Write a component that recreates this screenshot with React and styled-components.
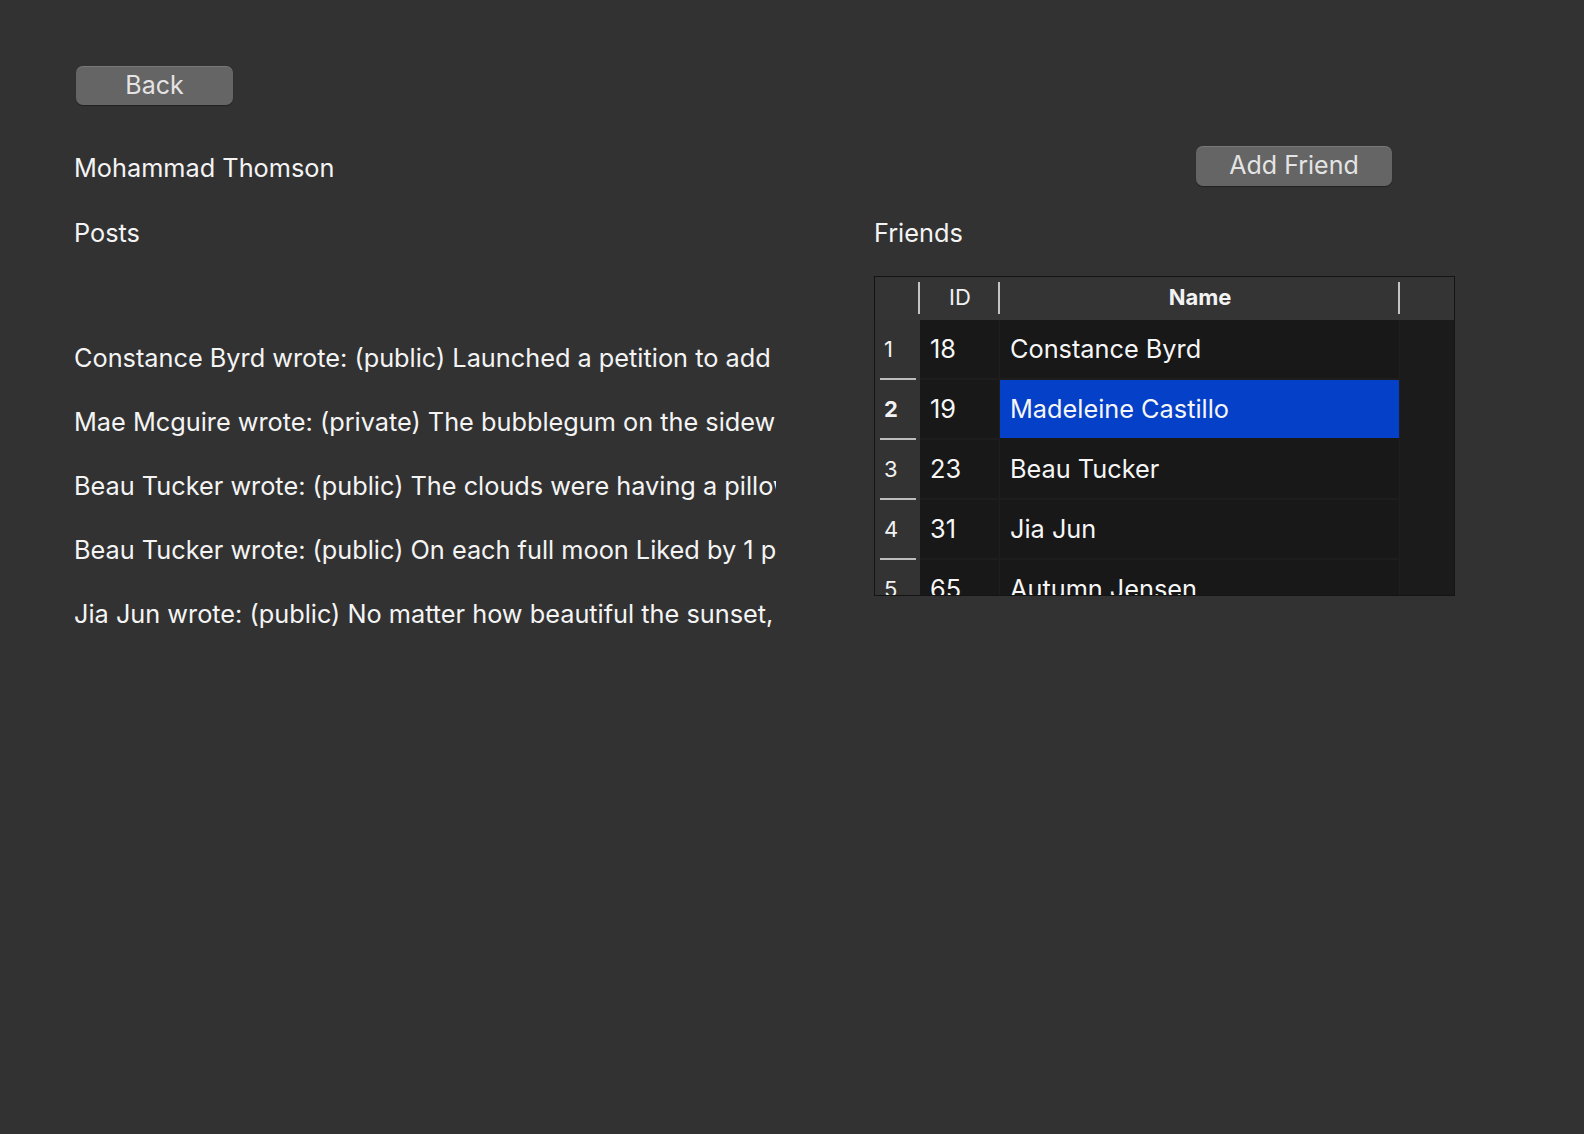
import React from 'react';
import styled, { createGlobalStyle } from 'styled-components';

const GlobalStyle = createGlobalStyle`
  html, body {
    margin: 0;
    padding: 0;
    background: #323232;
  }
  body {
    font-family: Inter, "Noto Sans", "Liberation Sans", sans-serif;
    color: #f2f2f2;
  }
`;

const Page = styled.div`
  min-height: 1134px;
  box-sizing: border-box;
  padding: 66px 0 0 74px;
  background: #323232;
`;

const Button = styled.button`
  display: flex;
  align-items: center;
  justify-content: center;
  width: ${({ w }) => w}px;
  height: ${({ h }) => h}px;
  margin-left: ${({ offset }) => offset || 0}px;
  padding: 0 0 2px;
  border: none;
  border-radius: 7px;
  background: #656565;
  box-shadow: 0 1px 1px rgba(0, 0, 0, 0.35), inset 0 1px 0 rgba(255, 255, 255, 0.12);
  color: #e4e4e4;
  font-family: inherit;
  font-size: 25px;
  cursor: pointer;
`;

const Layout = styled.div`
  display: grid;
  grid-template-columns: 800px 581px;
  margin-top: 41px;
`;

const Cell = styled.div`
  display: flex;
  align-items: center;
  min-height: ${({ h }) => h || 0}px;
`;

const Title = styled.div`
  font-size: 25.3px;
  line-height: 32px;
  padding-top: 4px;
  color: #f4f4f4;
`;

const LabelRow = styled.div`
  font-size: 25.3px;
  line-height: 32px;
  margin-top: 31px;
  margin-bottom: 27px;
  color: #f4f4f4;
`;

const PostList = styled.div`
  width: 702px;
  overflow: hidden;
  padding-top: 50px;
`;

const Post = styled.div`
  font-size: 25.3px;
  line-height: 64px;
  white-space: nowrap;
  color: #f4f4f4;
`;

const Table = styled.div`
  width: 581px;
  height: 320px;
  box-sizing: border-box;
  border: 1px solid #141414;
  background: #1b1b1b;
  overflow: hidden;
`;

const Row = styled.div`
  display: grid;
  grid-template-columns: 45px 80px 400px 1fr;
  height: ${({ h }) => h}px;
`;

const HeadCell = styled.div`
  position: relative;
  display: flex;
  align-items: center;
  justify-content: center;
  padding-bottom: 4px;
  background: #343434;
  font-size: 22px;
  font-weight: ${({ bold }) => (bold ? 700 : 400)};
  color: #f2f2f2;
  &::after {
    content: '';
    display: ${({ sep }) => (sep ? 'block' : 'none')};
    position: absolute;
    right: 0;
    top: 5px;
    bottom: 6px;
    width: 2px;
    background: #c4c4c4;
  }
`;

const RowNum = styled.div`
  position: relative;
  display: flex;
  align-items: center;
  padding-left: 9px;
  padding-bottom: 3px;
  background: #333333;
  font-size: 22px;
  font-weight: ${({ active }) => (active ? 700 : 400)};
  color: #f2f2f2;
  &::after {
    content: '';
    position: absolute;
    left: 5px;
    right: 4px;
    bottom: 0;
    height: 2px;
    background: #bdbdbd;
  }
`;

const DataCell = styled.div`
  display: flex;
  align-items: center;
  padding-left: 10px;
  padding-bottom: 2px;
  box-sizing: border-box;
  background: ${({ selected }) => (selected ? '#0540c9' : '#181818')};
  border-right: 1px solid #1f1f1f;
  border-bottom: 2px solid ${({ selected }) => (selected ? '#181818' : '#1d1d1d')};
  font-size: 25.3px;
  color: #f6f6f6;
`;

const Filler = styled.div`
  background: #1b1b1b;
`;

const posts = [
  'Constance Byrd wrote: (public) Launched a petition to add more benches to the park Liked by 3 people',
  'Mae Mcguire wrote: (private) The bubblegum on the sidewalk had a story to tell Liked by 2 people',
  'Beau Tucker wrote: (public) The clouds were having a pillow fight today Liked by 4 people',
  'Beau Tucker wrote: (public) On each full moon Liked by 1 person',
  'Jia Jun wrote: (public) No matter how beautiful the sunset, it always ends Liked by 5 people',
];

const friends = [
  { id: 18, name: 'Constance Byrd' },
  { id: 19, name: 'Madeleine Castillo' },
  { id: 23, name: 'Beau Tucker' },
  { id: 31, name: 'Jia Jun' },
  { id: 65, name: 'Autumn Jensen' },
];

const App = () => {
  const selected = 1;
  return (
    <Page>
      <GlobalStyle />
      <Button w={157} h={39} offset={2}>Back</Button>
      <Layout>
        <Cell h={40}>
          <Title>Mohammad Thomson</Title>
        </Cell>
        <Cell h={40}>
          <Button w={196} h={40} offset={322}>Add Friend</Button>
        </Cell>

        <LabelRow>Posts</LabelRow>
        <LabelRow>Friends</LabelRow>

        <PostList>
          {posts.map((p, i) => (
            <Post key={i}>{p}</Post>
          ))}
        </PostList>

        <Table>
          <Row h={43}>
            <HeadCell sep />
            <HeadCell sep>ID</HeadCell>
            <HeadCell sep bold>Name</HeadCell>
            <HeadCell />
          </Row>
          {friends.map((f, i) => (
            <Row h={60} key={f.id}>
              <RowNum active={i === selected}>{i + 1}</RowNum>
              <DataCell>{f.id}</DataCell>
              <DataCell selected={i === selected}>{f.name}</DataCell>
              <Filler />
            </Row>
          ))}
        </Table>
      </Layout>
    </Page>
  );
};

export default App;
